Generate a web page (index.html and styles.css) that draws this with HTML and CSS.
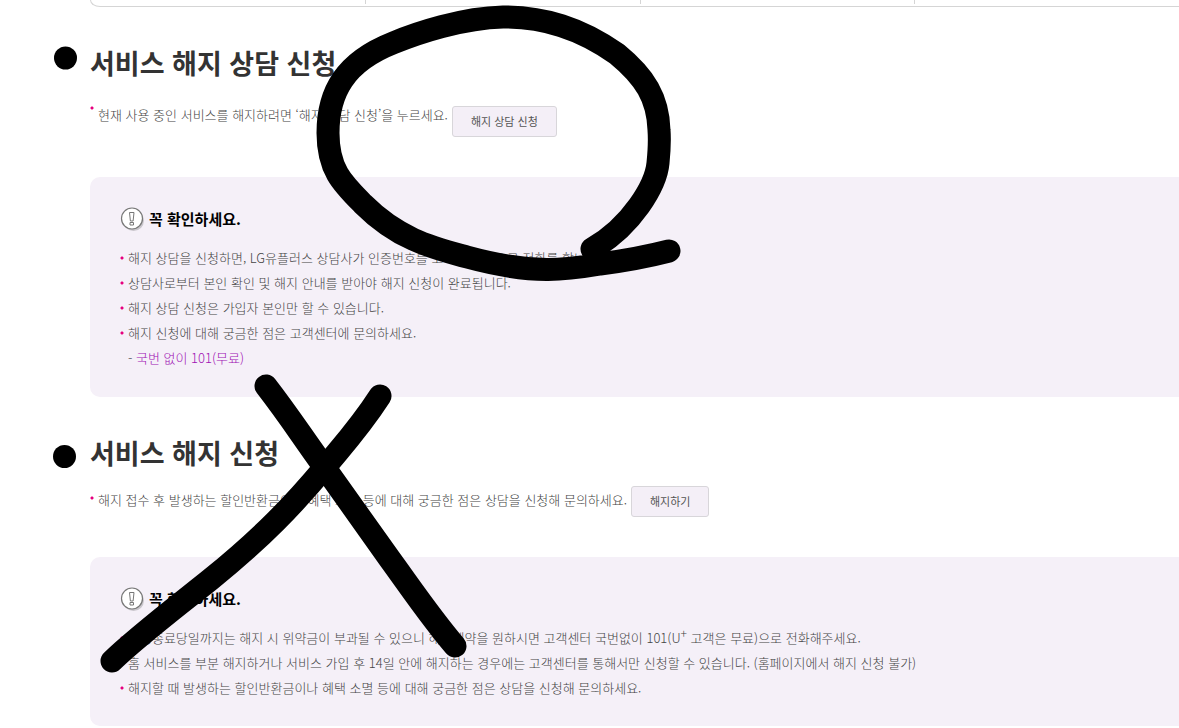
FILE: index.html
```html
<!DOCTYPE html>
<html lang="ko">
<head>
<meta charset="utf-8">
<title>서비스 해지 신청</title>
<link rel="stylesheet" href="styles.css">
</head>
<body>
<svg class="symbols" aria-hidden="true">
  <symbol id="notice" viewBox="0 0 25 25">
    <circle cx="13.500" cy="14.500" r="10.500" fill="#c9c6cc"/>
    <circle cx="12" cy="12.500" r="10.500" fill="#fff" stroke="#777" stroke-width="1.200"/>
    <path d="M9.500 6.500h4.500l-.9 8.500h-2.700zM10 16.500h3.500v2.500h-3.500z" fill="#fff" stroke="#777"/>
  </symbol>
</svg>
<main class="page">
  <div class="tabs"><span></span><span></span><span></span><span></span></div>

  <section class="section">
    <h2 class="heading">서비스 해지 상담 신청</h2>
    <div class="intro">
      <p class="intro-text">현재 사용 중인 서비스를 해지하려면 ‘해지 상담 신청’을 누르세요.</p>
      <button class="button" type="button">해지 상담 신청</button>
    </div>
    <div class="panel">
      <h3 class="panel-title"><svg class="icon" aria-hidden="true"><use href="#notice"/></svg>꼭 확인하세요.</h3>
      <ul class="list">
        <li>해지 상담을 신청하면, LG유플러스 상담사가 인증번호를 고객 휴대폰으로 전화를 합니다.</li>
        <li>상담사로부터 본인 확인 및 해지 안내를 받아야 해지 신청이 완료됩니다.</li>
        <li>해지 상담 신청은 가입자 본인만 할 수 있습니다.</li>
        <li>해지 신청에 대해 궁금한 점은 고객센터에 문의하세요.<br>- <span class="accent">국번 없이 101(무료)</span></li>
      </ul>
    </div>
  </section>

  <section class="section compact">
    <h2 class="heading">서비스 해지 신청</h2>
    <div class="intro">
      <p class="intro-text">해지 접수 후 발생하는 할인반환금이나 혜택 소멸 등에 대해 궁금한 점은 상담을 신청해 문의하세요.</p>
      <button class="button" type="button">해지하기</button>
    </div>
    <div class="panel">
      <h3 class="panel-title"><svg class="icon" aria-hidden="true"><use href="#notice"/></svg>꼭 확인하세요.</h3>
      <ul class="list">
        <li>약정종료당일까지는 해지 시 위약금이 부과될 수 있으니 해지예약을 원하시면 고객센터 국번없이 101(U<sup>+</sup> 고객은 무료)으로 전화해주세요.</li>
        <li>홈 서비스를 부분 해지하거나 서비스 가입 후 14일 안에 해지하는 경우에는 고객센터를 통해서만 신청할 수 있습니다. (홈페이지에서 해지 신청 불가)</li>
        <li>해지할 때 발생하는 할인반환금이나 혜택 소멸 등에 대해 궁금한 점은 상담을 신청해 문의하세요.</li>
      </ul>
    </div>
  </section>

  <svg class="marks" width="700" height="700" viewBox="0 0 700 700" aria-hidden="true">
    <circle cx="65.500" cy="58" r="11.500"/>
    <circle cx="64.500" cy="456.500" r="11.500"/>
    <path d="M592 249C632 226 656 185 658 163Q660 143 659 130C658 98 645 77 617 54C580 28 544 17 503 17C462 18 417 33 393 43C345 62 328 92 328 133C328 170 343 184 363 204C399 240 434 248 467 257C537 276 571 269 600 264Q638 259 669 251"/>
    <path d="M266 386C290 417 301 435 325 468L389 558C413 591 431 618 455 646"/>
    <path d="M380 396C360 427 345 443 325 467C294 504 263 537 211 579C175 608 138 636 112 661"/>
  </svg>
</main>
</body>
</html>
```

FILE: styles.css
```css
* { box-sizing: border-box; }

body {
  margin: 0;
  background: #fff;
  color: #444;
  font: 300 13px/25px "Noto Sans CJK KR", sans-serif;
}

h2, h3, p, ul { margin: 0; padding: 0; }

.symbols { display: none; }

.page {
  position: relative;
  padding-left: 90px;
  overflow: hidden;
}

.tabs {
  display: grid;
  grid-template-columns: 274px 275px 274px 1fr;
  height: 7px;
  padding-bottom: 2px;
  border: 1px solid #d5d5d5;
  border-width: 0 0 1px 1px;
  border-bottom-left-radius: 10px 7px;
}

.tabs span + span { border-left: 1px solid #d5d5d5; }

.section { padding-top: 36px; }

.heading {
  color: #333;
  font-size: 27px;
  font-weight: 700;
  line-height: 40px;
}

.intro {
  display: flex;
  align-items: flex-start;
  gap: 4px;
  margin: 23px 0 40px;
}

.intro-text {
  padding-left: 8px;
  line-height: 18px;
  background: radial-gradient(circle at 2px 2px, #e6007e 1px, transparent 2px) no-repeat;
}

.compact .intro { margin-top: 13px; }

.compact .intro-text {
  line-height: 28px;
  background: radial-gradient(circle at 2px 12px, #e6007e 1px, transparent 2px) no-repeat;
}

.button {
  height: 31px;
  padding: 0 18px;
  border: 1px solid #d8d6da;
  border-radius: 3px;
  background: #f4eff7;
  color: #555;
  font: 400 11px/29px "Noto Sans CJK KR", sans-serif;
}

.panel {
  padding: 29px 30px 27px;
  border-radius: 10px 0 0 10px;
  background: #f5f0f8;
}

.panel-title {
  display: flex;
  align-items: center;
  gap: 4px;
  color: #000;
  font-size: 15px;
  font-weight: 700;
  line-height: 25px;
}

.icon { width: 25px; height: 25px; }

.list {
  margin-top: 14px;
  list-style: none;
}

.list li {
  padding-left: 8px;
  background: radial-gradient(circle at 2px 13px, #e6007e 1px, transparent 2px) no-repeat;
}

.compact .panel { padding-bottom: 26px; }

.list sup {
  font-size: 12px;
  line-height: 0;
}

.accent { color: #a010b4; }

.marks {
  position: absolute;
  top: 0;
  left: 0;
  pointer-events: none;
}

.marks path {
  fill: none;
  stroke: #000;
  stroke-width: 23px;
  stroke-linecap: round;
  stroke-linejoin: round;
}
```
